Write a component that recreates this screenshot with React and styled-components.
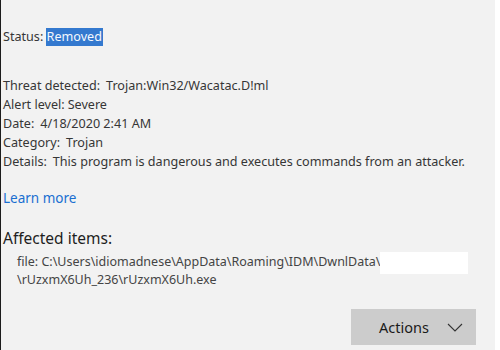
import React from 'react';
import styled, { createGlobalStyle } from 'styled-components';

const GlobalStyle = createGlobalStyle`
    html, body {
        margin: 0;
        padding: 0;
        background: #ffffff;
    }
`;

const Window = styled.div`
    width: 500px;
    height: 350px;
    display: flex;
    background: #ffffff;
    overflow: hidden;
`;

const Panel = styled.div`
    flex: 1;
    display: flex;
    flex-direction: column;
    background-color: #F2F2F2;
    border-left: 1px solid #1c1c1c;
    padding: 27px 0 0 2px;
    margin-right: 5px;
    font-family: "Noto Sans", "Open Sans", sans-serif;
    color: #363636;
    font-size: 12.6px;
`;

const Line = styled.div`
    line-height: 19px;
    white-space: nowrap;

    .value {
        margin-left: ${(p) => (p.$wide ? '6px' : '3px')};
    }
`;

const Highlight = styled.span`
    background-color: #3479CF;
    color: #F4F8FD;
    padding: 0 1px;
    margin-left: -1px;
    display: inline-block;
    line-height: 18px;
`;

const Details = styled.div`
    margin-top: 30px;
`;

const LearnMore = styled.a`
    margin-top: 18px;
    font-size: 13.5px;
    line-height: 19px;
    color: #1A6FD1;
    text-decoration: none;
    align-self: flex-start;
`;

const SectionTitle = styled.div`
    margin-top: 19px;
    font-size: 15.5px;
    line-height: 22px;
    color: #1e1e1e;
`;

const FilePath = styled.div`
    margin-top: 4px;
    padding-left: 14px;
    font-size: 12.5px;
    line-height: 17px;
    color: #444444;

    .redacted {
        display: inline-block;
        width: 88px;
        height: 22px;
        margin: -3px 0 -3px 0;
        vertical-align: middle;
        background: #ffffff;
    }
`;

const Footer = styled.div`
    margin-top: auto;
    display: flex;
    justify-content: flex-end;
    padding: 0 19px 5px 0;
`;

const ActionsButton = styled.button`
    width: 125px;
    height: 36px;
    border: none;
    background-color: #CCCCCC;
    display: flex;
    align-items: center;
    justify-content: flex-end;
    padding: 0 13px 0 0;
    gap: 18px;
    font-family: "Noto Sans", "Open Sans", sans-serif;
    font-size: 14.5px;
    color: #1a1a1a;

    svg {
        width: 16px;
        height: 9px;
    }
`;

const Chevron = () => (
    <svg viewBox="0 0 16 9">
        <polyline points="1,1 8,8 15,1" fill="none" stroke="#333" strokeWidth="1.1" />
    </svg>
);

const rows = [
    ['Threat detected:', 'Trojan:Win32/Wacatac.D!ml', true],
    ['Alert level:', 'Severe'],
    ['Date:', '4/18/2020 2:41 AM', true],
    ['Category:', 'Trojan', true],
    ['Details:', 'This program is dangerous and executes commands from an attacker.', true],
];

const App = () => (
    <Window>
        <GlobalStyle />
        <Panel>
            <Line>
                Status: <Highlight>Removed</Highlight>
            </Line>
            <Details>
                {rows.map(([label, value, wide]) => (
                    <Line key={label} $wide={wide}>
                        {label}
                        <span className="value">{value}</span>
                    </Line>
                ))}
            </Details>
            <LearnMore href="#">Learn more</LearnMore>
            <SectionTitle>Affected items:</SectionTitle>
            <FilePath>
                file: C:\Users\idiomadnese\AppData\Roaming\IDM\DwnlData\<span className="redacted" />
                <br />
                \rUzxmX6Uh_236\rUzxmX6Uh.exe
            </FilePath>
            <Footer>
                <ActionsButton>
                    Actions
                    <Chevron />
                </ActionsButton>
            </Footer>
        </Panel>
    </Window>
);

export default App;
